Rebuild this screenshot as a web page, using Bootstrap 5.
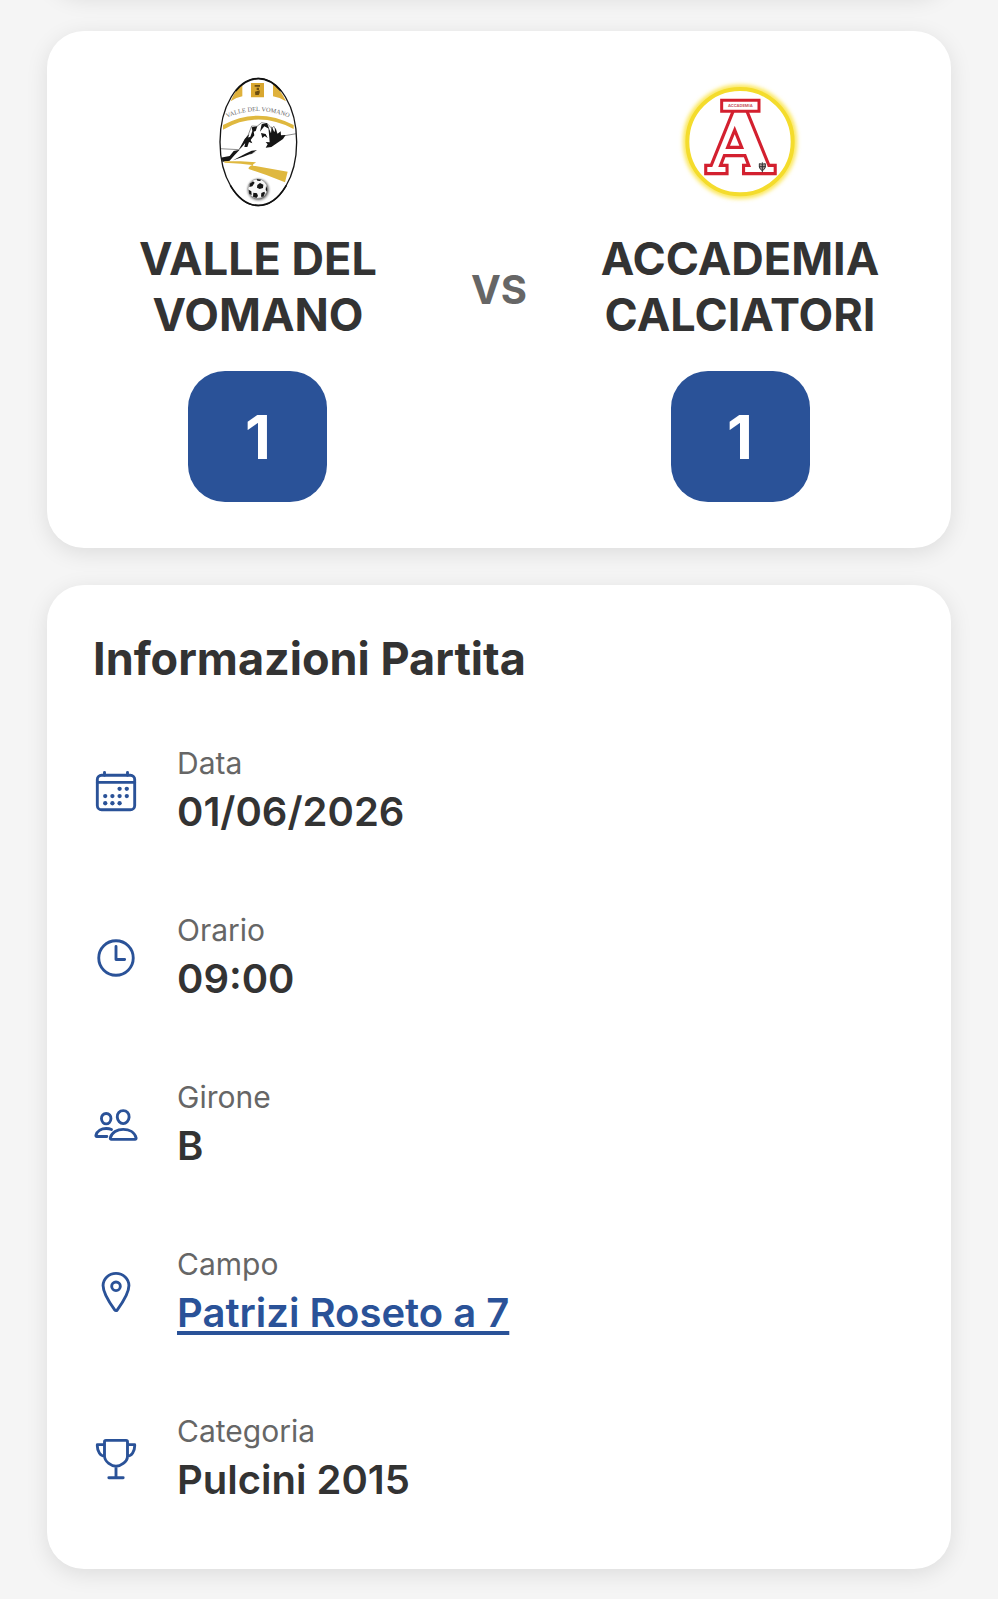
<!DOCTYPE html>
<html lang="it">
<head>
<meta charset="utf-8">
<meta name="viewport" content="width=device-width, initial-scale=1">
<title>Informazioni Partita</title>
<link rel="stylesheet" href="https://cdn.jsdelivr.net/npm/bootstrap@5.3.0/dist/css/bootstrap.min.css">
<style>
  body { background: #f5f5f5; color: #333; font-family: Inter, "Liberation Sans", sans-serif; overflow-x: hidden; }
  .page { padding: 0 47px 30px; gap: 37px; }
  .panel { background: #fff; border: 0; border-radius: 37px; padding: 46px; box-shadow: 0 5px 22px rgba(0,0,0,.1); }
  .panel-prev { height: 100px; margin-top: -106px; }
  .crest { height: 130px; margin-bottom: 24px; }
  .team-name { font-size: 45px; line-height: 56px; font-weight: 700; margin-bottom: 28px; }
  .score { background: #2a5298; color: #fff; border-radius: 37px; width: 139px; height: 131px; font-size: 60px; font-weight: 700; }
  .versus { color: #666; font-size: 40px; font-weight: 700; padding: 0 48px; }
  .panel-title { font-size: 45px; line-height: 56px; font-weight: 700; margin-bottom: 40px; }
  .info-list { gap: 39px; }
  .info-row { padding: 18px 0; gap: 38px; }
  .info-icon { width: 46px; height: 46px; fill: none; stroke: #2a5298; stroke-width: 32; stroke-linecap: round; stroke-linejoin: round; }
  .info-label { font-size: 30px; line-height: 36px; font-weight: 400; color: #666; margin-bottom: 6px; }
  .info-value { font-size: 40px; line-height: 50px; font-weight: 600; }
  .info-value a { color: #2a5298; text-underline-offset: 4px; text-decoration-thickness: 4px; text-decoration-skip-ink: none; }
  .crest-letter { paint-order: stroke; }
</style>
</head>
<body>
<main class="page d-flex flex-column">
  <div class="card panel panel-prev"></div>

  <section class="card panel">
    <div class="d-flex align-items-center text-center">
      <div class="team d-flex flex-column align-items-center flex-fill w-100">
        <svg class="crest" width="120" height="130" viewBox="-3 36 360 390" role="img" aria-label="Stemma Valle del Vomano">
          <defs>
            <clipPath id="oval"><ellipse cx="178" cy="231" rx="114" ry="190"/></clipPath>
            <path id="arc" d="M84 158Q178 116 285 164"/>
            <radialGradient id="halo"><stop offset=".7" stop-color="#777"/><stop offset="1" stop-color="#fff" stop-opacity="0"/></radialGradient>
          </defs>
          <ellipse cx="178" cy="231" rx="115" ry="191" fill="#fff"/>
          <g clip-path="url(#oval)">
            <path d="M130 54V94Q112 97 95 109Q107 78 130 54ZM222 54V94Q242 97 261 109Q247 78 222 54Z" fill="#dfb13c"/>
            <path d="M156 54h39v43h-39z" fill="#d9a72f"/>
            <path d="M167 60h16v5h-16zM173 68h7v7h-7zM168 80l14-4v7l-3 7h-10z" fill="#6b4d12"/>
            <path d="M72 180Q176 124 284 180V192Q176 134 72 194Z" fill="#dfb83f"/>
            <path d="M62 251 120 254 148 209 158 183 174 184 188 173 205 176 218 190 225 184 232 202 246 214 292 206" fill="none" stroke="#555" stroke-width="2"/>
            <path d="M64 278 92 273 104 258 122 254 105 272 92 287 68 291ZM120 254 137 222 151 207 144 228 128 247ZM136 246 142 220 154 215 160 198 158 187 175 184 170 198 164 200 166 211 155 225 160 235 150 231 145 246ZM183 200 188 178 204 174 211 192 196 184ZM186 204 200 207 206 219 197 213 190 219ZM211 219 208 186 216 205 218 184 226 202 230 188 235 207 245 199 246 211 260 210 252 222 217 246 200 248 206 238 200 231 212 232ZM102 286 139 266 158 257 174 255 151 270 171 260 133 275Z" fill="#151515"/>
            <path d="M76 289H125L172 292Q158 299 162 302L266 320 258 352 202 330 149 312Q147 306 160 300 133 296 76 293Z" fill="#dfb83f"/>
          </g>
          <ellipse cx="178" cy="231" rx="115" ry="191" fill="none" stroke="#151515" stroke-width="4"/>
          <path d="M110 78Q142 41 178 41T246 78M94 361Q130 421 178 421T262 361" fill="none" stroke="#111" stroke-width="5"/>
          <text font-family="Liberation Serif, serif" font-size="19" fill="#666"><textPath href="#arc">VALLE DEL VOMANO</textPath></text>
          <circle cx="178" cy="374" r="40" fill="url(#halo)"/>
          <circle cx="176" cy="371" r="29" fill="#f7f7f7" stroke="#999" stroke-width="2"/>
          <path d="M175 360 183 354 193 359 192 369 182 372 174 368ZM152 356l10-7 5 4-7 11-9 2ZM149 374l8 5 1 11-7-3ZM163 383l11 2 3 8-5 6-10-4ZM187 384l9-4 2 4-5 11-7 0ZM173 342l14 2-4 4-8-1ZM201 363l4 8-1 9-4-5Z" fill="#161616"/>
        </svg>
        <h2 class="team-name">VALLE DEL<br>VOMANO</h2>
        <div class="score d-flex align-items-center justify-content-center">1</div>
      </div>
      <div class="versus">VS</div>
      <div class="team d-flex flex-column align-items-center flex-fill w-100">
        <svg class="crest" width="130" height="130" viewBox="13 21 390 390" role="img" aria-label="Stemma Accademia Calciatori">
          <defs><filter id="glow" x="-20%" y="-20%" width="140%" height="140%"><feGaussianBlur stdDeviation="7"/></filter></defs>
          <circle cx="208" cy="215" r="163" fill="none" stroke="#fbe54a" stroke-width="16" filter="url(#glow)"/>
          <circle cx="208" cy="215" r="158" fill="#fff" stroke="#f4dc2c" stroke-width="12"/>
          <text class="crest-letter" x="209" y="306" font-family="DejaVu Serif, serif" font-weight="700" font-size="250" text-anchor="middle" fill="#fff" stroke="#d3202f" stroke-width="19">A</text>
          <path d="M153 91H265V124H153Z" fill="#fff" stroke="#d3202f" stroke-width="9"/>
          <text x="209" y="110" font-family="Inter, sans-serif" font-size="12" font-weight="700" text-anchor="middle" fill="#c8525c">ACCADEMIA</text>
          <path d="M266 281q9 3 18 0v10q-2 8-9 11-7-3-9-11zM275 277v30M265 290h20" fill="#a99" stroke="#333" stroke-width="3"/>
        </svg>
        <h2 class="team-name">ACCADEMIA<br>CALCIATORI</h2>
        <div class="score d-flex align-items-center justify-content-center">1</div>
      </div>
    </div>
  </section>

  <section class="card panel">
    <h1 class="panel-title">Informazioni Partita</h1>
    <dl class="info-list d-flex flex-column mb-0">
      <div class="info-row d-flex align-items-center">
        <svg class="info-icon" viewBox="0 0 512 512" aria-hidden="true"><rect x="48" y="80" width="416" height="384" rx="48"/><path d="M128 48v32M384 48v32M464 160H48"/><g fill="#2a5298" stroke="none"><circle cx="296" cy="232" r="24"/><circle cx="376" cy="232" r="24"/><circle cx="296" cy="312" r="24"/><circle cx="376" cy="312" r="24"/><circle cx="136" cy="312" r="24"/><circle cx="216" cy="312" r="24"/><circle cx="136" cy="392" r="24"/><circle cx="216" cy="392" r="24"/><circle cx="296" cy="392" r="24"/></g></svg>
        <div><dt class="info-label">Data</dt><dd class="info-value mb-0">01/06/2026</dd></div>
      </div>
      <div class="info-row d-flex align-items-center">
        <svg class="info-icon" viewBox="0 0 512 512" aria-hidden="true"><circle cx="256" cy="256" r="192"/><path d="M256 128v144h96"/></svg>
        <div><dt class="info-label">Orario</dt><dd class="info-value mb-0">09:00</dd></div>
      </div>
      <div class="info-row d-flex align-items-center">
        <svg class="info-icon" viewBox="0 0 512 512" aria-hidden="true"><path d="M402 168c-2.930 40.670-33.100 72-66 72s-63.120-31.320-66-72c-3-42.310 26.370-72 66-72s69 30.460 66 72z"/><path d="M336 304c-65.170 0-127.840 32.370-143.540 95.410-2.080 8.340 3.150 16.590 11.720 16.590h263.650c8.570 0 13.770-8.250 11.720-16.590C463.850 335.360 401.180 304 336 304z"/><path d="M200 185.940c-2.340 32.480-26.720 58.060-53 58.060s-50.700-25.570-53-58.060C91.610 152.150 115.340 128 147 128s55.390 24.770 53 57.940z"/><path d="M206 306c-18.050-8.270-37.930-11.450-59-11.450-52 0-102.100 25.850-114.650 76.200-1.650 6.660 2.530 13.250 9.370 13.250H154"/></svg>
        <div><dt class="info-label">Girone</dt><dd class="info-value mb-0">B</dd></div>
      </div>
      <div class="info-row d-flex align-items-center">
        <svg class="info-icon" viewBox="0 0 512 512" aria-hidden="true"><path d="M256 48c-79.500 0-144 61.390-144 137 0 87 96 224.870 131.250 272.490a15.770 15.770 0 0 0 25.500 0C304 409.890 400 272.070 400 185c0-75.610-64.500-137-144-137z"/><circle cx="256" cy="192" r="48"/></svg>
        <div><dt class="info-label">Campo</dt><dd class="info-value mb-0"><a href="#campo">Patrizi Roseto a 7</a></dd></div>
      </div>
      <div class="info-row d-flex align-items-center">
        <svg class="info-icon" viewBox="0 0 512 512" aria-hidden="true"><path d="M176 464h160M256 464V336M384 224c0-50.640-.08-134.630-.12-160a16 16 0 0 0-16-16l-223.790.26a16 16 0 0 0-16 15.950c0 30.580-.13 129.170-.13 159.790 0 64.280 83 112 128 112S384 288.280 384 224zM128 96H48v16c0 55.220 33.550 112 80 112M384 96h80v16c0 55.220-33.550 112-80 112"/></svg>
        <div><dt class="info-label">Categoria</dt><dd class="info-value mb-0">Pulcini 2015</dd></div>
      </div>
    </dl>
  </section>
</main>
<script src="https://cdn.jsdelivr.net/npm/bootstrap@5.3.0/dist/js/bootstrap.bundle.min.js"></script>
</body>
</html>
